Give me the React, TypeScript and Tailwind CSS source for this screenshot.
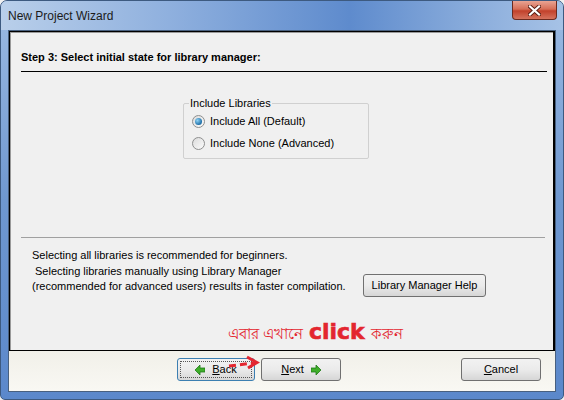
const ui = "font-['Liberation_Sans',Arial,sans-serif]";

const GreenArrow = ({ dir }: { dir: "left" | "right" }) => (
  <svg width="10" height="10" viewBox="0 0 10 10" className="shrink-0">
    <polygon
      points={dir === "left" ? "0,5 5,0 5,3 10,3 10,7 5,7 5,10" : "10,5 5,0 5,3 0,3 0,7 5,7 5,10"}
      fill="#3fae2a"
      stroke="#1f7a18"
      strokeWidth="0.8"
    />
  </svg>
);

const Radio = ({ checked }: { checked?: boolean }) => (
  <span className="w-[13px] h-[13px] rounded-full border border-[#8e8f8f] bg-gradient-to-br from-[#dcdcdc] to-[#fbfbfb] flex items-center justify-center shrink-0">
    {checked && (
      <span className="w-[7px] h-[7px] rounded-full bg-[radial-gradient(circle_at_35%_35%,#8fd3f5,#1e6fa8_70%,#0f4f80)]" />
    )}
  </span>
);

const WinButton = ({
  children,
  focused,
  className = "",
}: {
  children: React.ReactNode;
  focused?: boolean;
  className?: string;
}) => (
  <button
    className={`h-[23px] rounded-[3px] border ${
      focused ? "border-[#3c7fb1]" : "border-[#707070]"
    } bg-gradient-to-b from-[#f2f2f2] via-[#ebebeb] to-[#d6d6d6] p-[2px] text-[11px] text-black ${className}`}
  >
    <span
      className={`flex h-full items-center justify-center gap-[7px] ${
        focused ? "border border-dotted border-[#555]" : ""
      }`}
    >
      {children}
    </span>
  </button>
);

export default function App() {
  return (
    <div className={`w-[564px] h-[400px] ${ui} bg-[#f0f0f0]`}>
      <div className="w-full h-full rounded-t-[7px] rounded-b-[5px] border border-[#3d5a80] bg-gradient-to-b from-[#9dbbe3] via-[#6f98d0] to-[#5b88cb] flex flex-col overflow-hidden">
        {/* title bar */}
        <div className="h-[29px] shrink-0 flex items-start justify-between bg-[linear-gradient(90deg,#b9cfea_0%,#8fb0de_30%,#5e8bcd_62%,#8caedc_85%,#a6c2e6_100%)]">
          <span className="pl-[7px] pt-[6px] text-[12px] text-[#1b1b1b]">New Project Wizard</span>
          <div className="mr-[6px] w-[45px] h-[19px] rounded-b-[4px] border border-t-0 border-[#6b2a1f] bg-[linear-gradient(180deg,#e9a493_0%,#d66e57_45%,#c2412b_55%,#d5735e_100%)] flex items-center justify-center">
            <svg width="13" height="11" viewBox="0 0 13 11">
              <path
                d="M2 1.5 L11 9.5 M11 1.5 L2 9.5"
                stroke="#5a1e14"
                strokeWidth="4"
                strokeLinecap="square"
              />
              <path
                d="M2 1.5 L11 9.5 M11 1.5 L2 9.5"
                stroke="#ffffff"
                strokeWidth="2.2"
                strokeLinecap="square"
              />
            </svg>
          </div>
        </div>

        {/* client area */}
        <div className="mx-[7px] mb-[7px] flex-1 flex flex-col bg-[#f3f2ec] border border-[#48607f]">
          {/* wizard page */}
          <div className="h-[320px] shrink-0 bg-[#f0f0f0] border border-black border-r-2 shadow-[inset_1px_1px_0_#9a9a9a] flex flex-col text-[11px] text-black">
            <div className="mx-[11px] mr-[6px] pt-[19px] pb-[7px] border-b border-black font-bold leading-[13px]">
              Step 3: Select initial state for library manager:
            </div>

            <fieldset className="ml-[173px] mt-[25px] w-[186px] border border-[#d0d0d0] rounded-[2px] pl-[8px] pb-[4px]">
              <legend className="ml-[-3px] px-[1px] leading-[13px]">Include Libraries</legend>
              <label className="h-[22px] flex items-center gap-[5px]">
                <Radio checked />
                <span>Include All (Default)</span>
              </label>
              <label className="h-[22px] flex items-center gap-[5px]">
                <Radio />
                <span>Include None (Advanced)</span>
              </label>
            </fieldset>

            <div className="ml-[11px] mr-[8px] mt-[78px] border-t border-[#a0a0a0]" />

            <div className="flex items-end mt-[10px]">
              <div className="w-[353px] pl-[22px] leading-[15.5px] whitespace-nowrap">
                <p>Selecting all libraries is recommended for beginners.</p>
                <p className="pl-[3px]">Selecting libraries manually using Library Manager</p>
                <p>(recommended for advanced users) results in faster compilation.</p>
              </div>
              <WinButton className="w-[123px] mb-[-2px]">Library Manager Help</WinButton>
            </div>

            <div className="mt-[26px] pl-[218px] flex items-baseline gap-[6px] text-[#e3262f] whitespace-nowrap">
              <span className="text-[15px] font-['Noto_Sans',sans-serif]">এবার এখানে</span>
              <span className="text-[22px] font-bold font-['DejaVu_Sans',sans-serif] leading-[22px] [-webkit-text-stroke:0.6px_#e3262f]">
                click
              </span>
              <span className="text-[15px] font-['Noto_Sans',sans-serif]">করুন</span>
            </div>
          </div>

          {/* footer */}
          <div className="relative flex-1 bg-gradient-to-b from-[#f1f0e9] to-[#f9f8f3] flex items-start pt-[7px] pl-[168px]">
            <WinButton focused className="w-[78px]">
              <GreenArrow dir="left" />
              <span>
                <u>B</u>ack
              </span>
            </WinButton>
            <WinButton className="ml-[6px] w-[80px]">
              <span>
                <u>N</u>ext
              </span>
              <GreenArrow dir="right" />
            </WinButton>
            <WinButton className="ml-[120px] w-[80px]">
              <span>
                <u>C</u>ancel
              </span>
            </WinButton>

            <svg
              className="absolute left-[212px] top-[3px]"
              width="42"
              height="18"
              viewBox="0 0 42 18"
            >
              <path d="M8 12 L33 9" stroke="#e3262f" strokeWidth="3" strokeDasharray="7 4" />
              <path d="M26 3 L36 8.5 L27 14" stroke="#e3262f" strokeWidth="3" fill="none" />
            </svg>
          </div>
        </div>
      </div>
    </div>
  );
}
